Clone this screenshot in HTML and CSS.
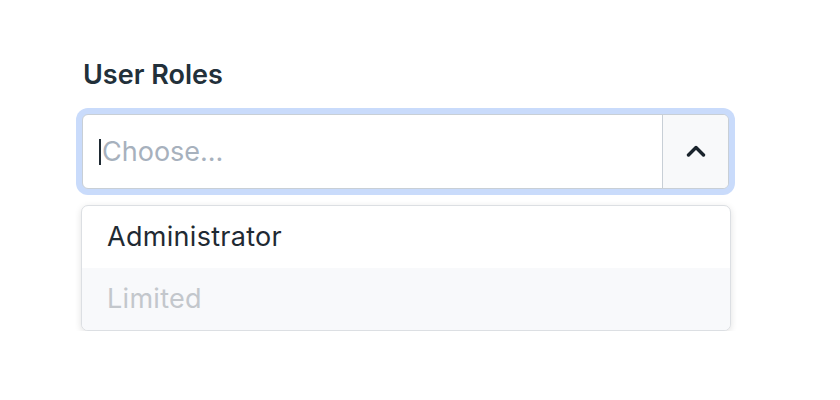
FILE: index.html
```html
<!DOCTYPE html>
<html lang="en">
<head>
<meta charset="utf-8">
<title>User Roles</title>
<link rel="stylesheet" href="styles.css">
</head>
<body>
<div class="field">
  <label class="label">User Roles</label>
  <div class="select">
    <div class="control">
      <span class="caret"></span>
      <span class="placeholder">Choose...</span>
    </div>
    <div class="toggle">
      <svg width="20" height="12" viewBox="0 0 20 12" aria-hidden="true">
        <path d="M2.5 10 L10 2.5 L17.5 10" fill="none" stroke="#1a242c" stroke-width="3.4" stroke-linecap="round" stroke-linejoin="round"/>
      </svg>
    </div>
  </div>
  <ul class="menu">
    <li class="option">Administrator</li>
    <li class="option option-disabled">Limited</li>
  </ul>
</div>
</body>
</html>
```

FILE: styles.css
```css
html, body {
  margin: 0;
  padding: 0;
  background: #ffffff;
}

body {
  font-family: Inter, "Noto Sans", "Liberation Sans", sans-serif;
  font-size: 27px;
  color: #1f2a33;
}

.field {
  width: 650px;
  margin: 58px 0 0 81px;
}

.label {
  display: block;
  font-weight: 600;
  line-height: 33px;
  margin-left: 2px;
  color: #22303a;
}

.select {
  display: flex;
  height: 75px;
  width: 647px;
  margin: 23px 0 0 1px;
  box-sizing: border-box;
  border: 1px solid #c8cfd6;
  border-radius: 6px;
  box-shadow: 0 0 0 6px #c9dbfb;
  overflow: hidden;
  background: #ffffff;
}

.control {
  flex: 1;
  display: flex;
  align-items: center;
  padding-left: 16px;
}

.caret {
  width: 2px;
  height: 26px;
  background: #1f2a33;
  margin-right: 1px;
}

.placeholder {
  color: #a7b1bd;
}

.toggle {
  width: 65px;
  display: flex;
  align-items: center;
  justify-content: center;
  border-left: 1px solid #c8cfd6;
  background: #f8f9fa;
}

.toggle svg {
  display: block;
  margin-top: -2px;
}

.menu {
  list-style: none;
  margin: 16px 0 0 0;
  padding: 0;
  border: 1px solid #dcdfe3;
  border-radius: 7px;
  box-shadow: 0 2px 7px rgba(0, 0, 0, 0.12);
  overflow: hidden;
  background: #ffffff;
}

.option {
  height: 62px;
  line-height: 62px;
  padding: 0 25px;
  letter-spacing: 0.3px;
  color: #1f2a33;
}

.option-disabled {
  background: #f8f9fb;
  color: #c3c7cc;
}
```
